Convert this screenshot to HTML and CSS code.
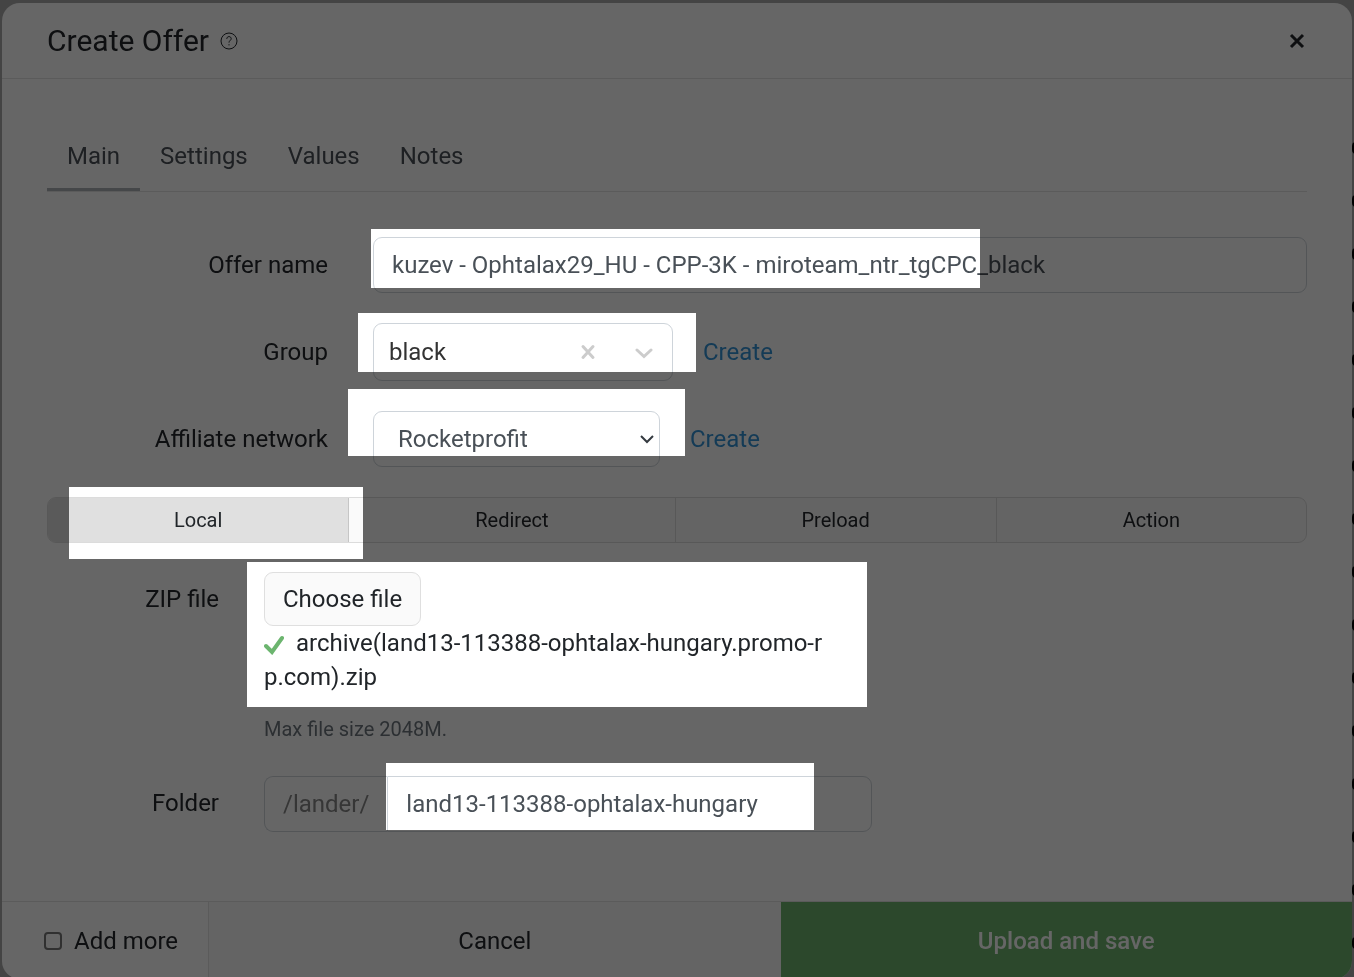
FILE: index.html
```html
<!DOCTYPE html>
<html lang="en">
<head>
    <meta charset="UTF-8">
    <meta name="viewport" content="width=device-width, initial-scale=1.0">
    <title>Create Offer</title>
    <link rel="stylesheet" href="styles.css">
</head>
<body>
    <div class="page">
        <!-- Edge of the table behind the modal -->
        <div class="backdrop-rows">
            <i></i><i></i><i></i><i></i><i></i><i></i><i></i><i></i>
            <i></i><i></i><i></i><i></i><i></i><i></i><i></i><i></i>
        </div>

        <form class="modal">
            <header class="modal-header">
                <h1>Create Offer</h1>
                <svg class="help-icon" viewBox="0 0 18 18" width="18" height="18">
                    <circle cx="9" cy="9" r="8" />
                    <path d="M6.8 6.9c0-1.4.9-2.3 2.2-2.3s2.2.9 2.2 2.1c0 1.700-2.200 1.900-2.200 3.900M9 12.200v1.200" />
                </svg>
                <button type="button" class="close-btn" aria-label="Close">
                    <svg viewBox="0 0 16 16" width="16" height="16">
                        <path d="M2 2l12 12M14 2L2 14" />
                    </svg>
                </button>
            </header>

            <div class="modal-body">
                <nav class="tabs">
                    <a href="#main" class="tab active">Main</a>
                    <a href="#settings" class="tab">Settings</a>
                    <a href="#values" class="tab">Values</a>
                    <a href="#notes" class="tab">Notes</a>
                </nav>

                <div class="form-row">
                    <label for="offerName">Offer name</label>
                    <input type="text" id="offerName" class="form-control" value="kuzev - Ophtalax29_HU - CPP-3K - miroteam_ntr_tgCPC_black">
                </div>

                <div class="form-row">
                    <label for="group">Group</label>
                    <div class="combo">
                        <input type="text" id="group" value="black">
                        <button type="button" aria-label="Clear group">
                            <svg viewBox="0 0 18 18" width="18" height="18">
                                <path d="M4 3.500l10 11M14 3.500L4 14.500" />
                            </svg>
                        </button>
                        <button type="button" aria-label="Open group list">
                            <svg viewBox="0 0 18 18" width="18" height="18">
                                <path d="M2 7l7 6.500L16 7" />
                            </svg>
                        </button>
                    </div>
                    <a href="#" class="create-link">Create</a>
                </div>

                <div class="form-row">
                    <label for="network">Affiliate network</label>
                    <div class="select">
                        <select id="network" class="form-control">
                            <option>Rocketprofit</option>
                        </select>
                        <svg viewBox="0 0 14 10" width="14" height="10">
                            <path d="M1 2l6 6 6-6" />
                        </svg>
                    </div>
                    <a href="#" class="create-link">Create</a>
                </div>

                <div class="segments">
                    <button type="button" class="active">Local</button>
                    <button type="button">Redirect</button>
                    <button type="button">Preload</button>
                    <button type="button">Action</button>
                </div>

                <div class="form-row narrow">
                    <label for="chooseFile">ZIP file</label>
                    <div class="file">
                        <button type="button" id="chooseFile" class="btn">Choose file</button>
                        <p class="file-name"><svg viewBox="0 0 20 20" width="20" height="20"><path d="M2 11l6 6L18 3" /></svg>archive(land13-113388-ophtalax-hungary.promo-rp.com).zip</p>
                        <p class="hint">Max file size 2048M.</p>
                    </div>
                </div>

                <div class="form-row narrow">
                    <label for="folder">Folder</label>
                    <div class="input-group">
                        <span>/lander/</span>
                        <input type="text" id="folder" class="form-control" value="land13-113388-ophtalax-hungary">
                    </div>
                </div>
            </div>

            <footer class="modal-footer">
                <label class="add-more"><input type="checkbox"> Add more</label>
                <button type="button" class="cancel">Cancel</button>
                <button type="submit" class="save">Upload and save</button>
            </footer>
        </form>

        <!-- Darkens the page, white spots stay bright -->
        <div class="shade">
            <div class="spot spot-name"></div>
            <div class="spot spot-group"></div>
            <div class="spot spot-network"></div>
            <div class="spot spot-local"></div>
            <div class="spot spot-file"></div>
            <div class="spot spot-folder"></div>
        </div>
    </div>
</body>
</html>
```

FILE: styles.css
```css
* {
    box-sizing: border-box;
}
body {
    margin: 0;
    font-family: Roboto, sans-serif;
    font-size: 24px;
    line-height: 34px;
    color: #212529;
}
h1, p {
    margin: 0;
    font-weight: 400;
}
a {
    text-decoration: none;
}
button, input, select {
    font: inherit;
    color: inherit;
}
button {
    padding: 0;
    border: none;
    background: none;
    cursor: pointer;
}
svg {
    fill: none;
    stroke: currentColor;
}
.page {
    position: relative;
    isolation: isolate;
    display: flex;
    min-height: 100vh;
    padding: 3px 2px 0;
    background: #aaa;
    overflow: hidden;
}

/* Table edge behind the modal */
.backdrop-rows {
    position: absolute;
    top: 142px;
    right: -8px;
    display: flex;
    flex-direction: column;
    gap: 41px;
}
.backdrop-rows i {
    width: 10px;
    height: 12px;
    flex: none;
    border: 2px solid #000;
    border-radius: 4px;
}

/* Modal */
.modal {
    position: relative;
    flex: 1;
    display: flex;
    flex-direction: column;
    margin-bottom: -2px;
    border-radius: 18px;
    background: #fff;
    overflow: hidden;
}
.modal-header {
    display: flex;
    align-items: center;
    height: 76px;
    padding: 0 45px;
    border-bottom: 1px solid #e2e2e2;
}
.modal-header h1 {
    font-size: 30px;
}
.help-icon {
    margin-left: 11px;
}
.close-btn {
    display: flex;
    margin-left: auto;
    padding: 2px;
    stroke-width: 3;
}
.modal-body {
    flex: 1;
    padding: 45px 45px 0;
}
.tabs {
    display: flex;
    margin-bottom: 45px;
    border-bottom: 1px solid #e2e2e2;
}
.tab {
    padding: 15px 20px;
    border-bottom: 3px solid transparent;
    color: #495057;
}
.tab.active {
    border-color: #adb1b5;
}

/* Form */
.form-row {
    display: flex;
    align-items: center;
    margin-bottom: 30px;
}
.form-row > label {
    flex: none;
    width: 281px;
    margin-right: 45px;
    text-align: right;
}
.form-row.narrow > label {
    width: 172px;
}
.form-control {
    width: 100%;
    height: 56px;
    padding: 0 18px;
    border: 1px solid #ced4da;
    border-radius: 9px;
    background: #fff;
    color: #495057;
}
.combo {
    display: flex;
    align-items: center;
    width: 300px;
    height: 58px;
    border: 1px solid #ced4da;
    border-radius: 9px;
    color: #333;
}
.combo input {
    flex: 1;
    min-width: 0;
    padding: 0 15px;
    border: none;
    outline: none;
    background: none;
}
.combo button {
    display: flex;
    justify-content: center;
    width: 56px;
    color: #ccc;
    stroke-width: 3;
    stroke-linecap: round;
}
.create-link {
    margin-left: 30px;
    color: #3292d6;
}
.select {
    position: relative;
    width: 287px;
}
.select select {
    padding: 0 24px;
    appearance: none;
}
.select svg {
    position: absolute;
    top: 23px;
    right: 6px;
    stroke: #343a40;
    stroke-width: 2;
    pointer-events: none;
}
.segments {
    display: flex;
    margin-bottom: 29px;
    border: 1px solid #dcdcdc;
    border-radius: 9px;
    background: #fafafa;
    overflow: hidden;
}
.segments button {
    flex: 1 1 auto;
    height: 44px;
    border-right: 1px solid #dcdcdc;
    font-size: 20px;
}
.segments button:last-child {
    border-right: none;
}
.segments .active {
    border-color: #c6c6c6;
    background: #e0e0e0;
}
.form-row.narrow {
    align-items: flex-start;
}
.form-row.narrow > label {
    padding: 10px 0;
}
.btn {
    display: block;
    height: 54px;
    padding: 0 18px;
    border: 1px solid #dfdfdf;
    border-radius: 9px;
    background: #fafafa;
}
.file-name {
    max-width: 564px;
    word-break: break-all;
}
.file-name svg {
    margin-right: 12px;
    vertical-align: -4px;
    stroke: #6cb56f;
    stroke-width: 4;
    stroke-linecap: round;
}
.hint {
    margin-top: 18px;
    font-size: 20px;
    color: #6c757d;
}
.input-group {
    display: flex;
    width: 608px;
}
.input-group span {
    padding: 10px 18px;
    border: 1px solid #ced4da;
    border-right: none;
    border-radius: 9px 0 0 9px;
    color: #868686;
}
.input-group .form-control {
    flex: 1;
    min-width: 0;
    border-radius: 0 9px 9px 0;
}

/* Footer */
.modal-footer {
    display: flex;
    height: 78px;
    border-top: 1px solid #e2e2e2;
}
.modal-footer button {
    flex: 1;
}
.add-more {
    display: flex;
    align-items: center;
    gap: 12px;
    padding: 0 30px 0 42px;
    border-right: 1px solid #e2e2e2;
}
.add-more input {
    width: 18px;
    height: 18px;
    margin: 0;
    border: 2px solid #767676;
    border-radius: 4px;
    appearance: none;
}
.modal-footer .cancel {
    background: #fafafa;
}
.modal-footer .save {
    background: #6eb46e;
    color: #fff;
    font-weight: 500;
}

/* Shade with highlighted spots */
.shade {
    position: absolute;
    inset: 0;
    background: #666;
    mix-blend-mode: multiply;
    pointer-events: none;
}
.spot {
    position: absolute;
    background: #fff;
}
.spot-name {
    left: 371px;
    top: 229px;
    width: 609px;
    height: 59px;
}
.spot-group {
    left: 358px;
    top: 313px;
    width: 338px;
    height: 59px;
}
.spot-network {
    left: 348px;
    top: 389px;
    width: 337px;
    height: 67px;
}
.spot-local {
    left: 69px;
    top: 487px;
    width: 294px;
    height: 72px;
}
.spot-file {
    left: 247px;
    top: 562px;
    width: 620px;
    height: 145px;
}
.spot-folder {
    left: 386px;
    top: 763px;
    width: 428px;
    height: 67px;
}
```
